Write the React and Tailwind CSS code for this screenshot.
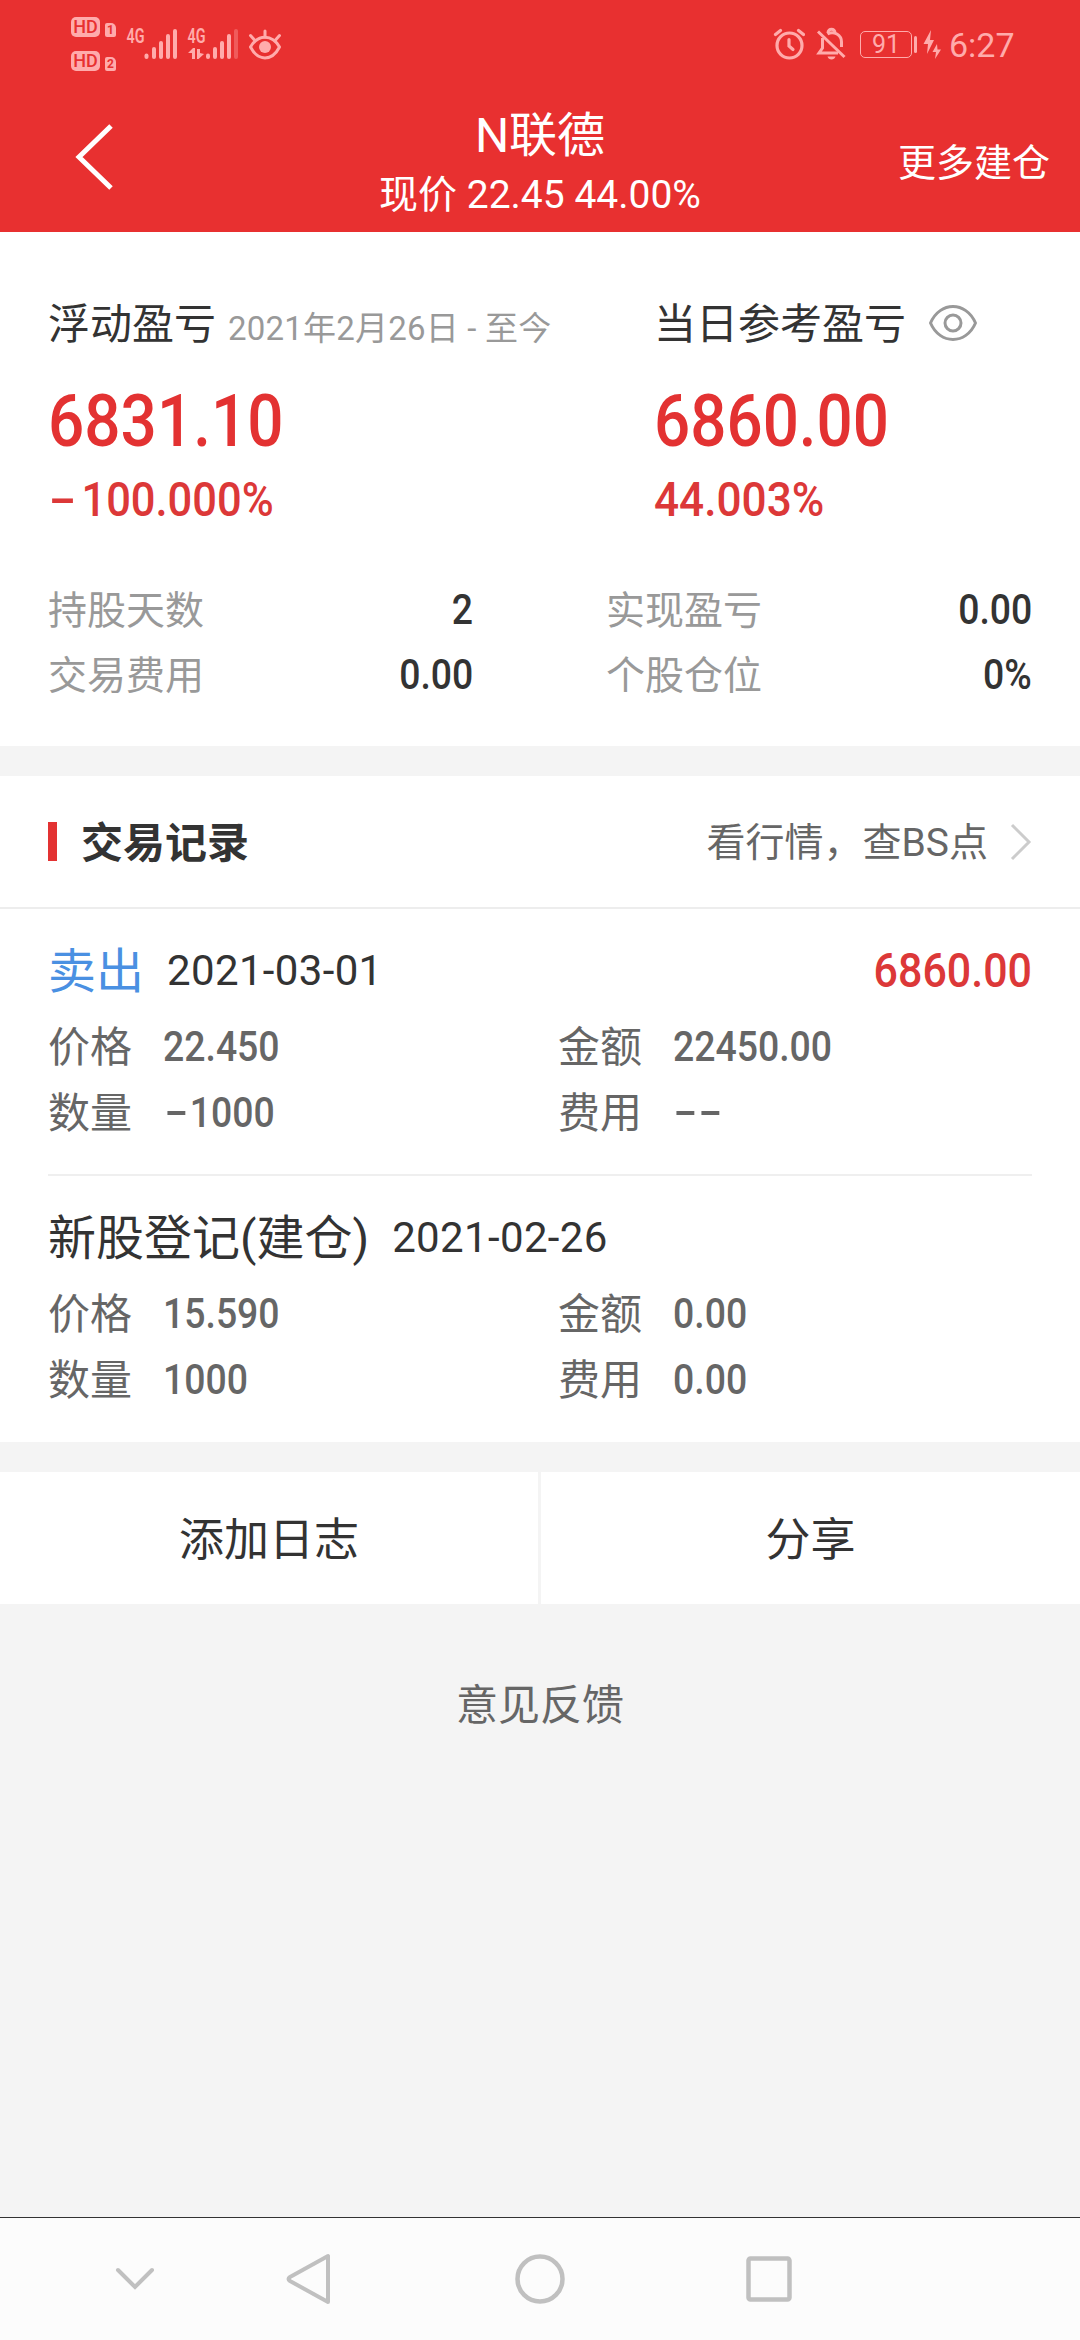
import React from "react";

const PINK = "#ffabab";
const NUM = "font-medium whitespace-nowrap";

/* Minus sign drawn wider than the font's own hyphen */
function Minus({ className = "" }) {
  return (
    <span className={"inline-block text-center " + className}>
      <span className="inline-block -translate-y-px scale-x-[1.85]">-</span>
    </span>
  );
}

function SimBadge({ n }) {
  return (
    <div className="flex h-5 items-end gap-[5px]">
      <div className="flex h-5 w-[29px] items-center justify-center rounded-[5px] bg-[#ffabab] text-[18px] leading-none font-medium text-[#e83030]">
        HD
      </div>
      <div className="flex h-[14px] w-[11px] items-center justify-center rounded-[2px] rounded-tr-[5px] bg-[#ffabab] text-[12px] leading-none font-bold text-[#e83030]">
        {n}
      </div>
    </div>
  );
}

function Signal({ weak, data }) {
  return (
    <svg width="56" height="44" viewBox="-2 -8 56 44" className="block">
      <text x="-0.5" y="16" fontSize="20" fontWeight="600" textLength="18" lengthAdjust="spacingAndGlyphs" fill={PINK}>
        4G
      </text>
      {data && (
        <g fill={PINK}>
          <path d="M0 26 L5 21 H7 V32 H4 V26 Z" />
          <path d="M9 22 H12 V26 L16 27 L10.500 32 H9 Z" />
        </g>
      )}
      <g stroke={PINK} strokeWidth="4" strokeLinecap="round">
        <path d={data ? "M20 28.500 V30" : "M19.500 28.500 V30"} />
        <path d="M27 22 V30" />
        <path d="M34 16 V30" />
        <path d="M41 9 V30" />
        <path d="M48 4 V30" opacity={weak ? 0.35 : 1} />
      </g>
    </svg>
  );
}

function StatusBar() {
  return (
    <div className="flex h-[88px] items-start">
      <div className="ml-[71px] mt-[17px] flex flex-col gap-[14px]">
        <SimBadge n="1" />
        <SimBadge n="2" />
      </div>
      <div className="ml-[9px] mt-[19px]">
        <Signal />
      </div>
      <div className="ml-[5px] mt-[19px]">
        <Signal weak data />
      </div>
      <svg width="36" height="34" viewBox="0 0 36 34" className="ml-[5px] mt-[27px] block" fill="none" stroke={PINK} strokeWidth="3" strokeLinecap="round">
        <path d="M3.500 20 C11 7 25 7 32.500 20 C25 34.500 11 34.500 3.500 20 Z" strokeLinejoin="round" />
        <circle cx="18" cy="20" r="6" fill={PINK} stroke="none" />
        <path d="M18 4 V10 M3.500 8.500 L7.500 13 M32.500 8.500 L28.500 13" />
      </svg>
      <svg width="32" height="34" viewBox="0 0 32 34" className="ml-[490px] mt-[27px] block" fill="none" stroke={PINK} strokeWidth="3.200" strokeLinecap="round">
        <circle cx="16.500" cy="18.500" r="12.500" />
        <path d="M2.500 7.500 L7.500 3.500 M30.500 7.500 L25.500 3.500" />
        <path d="M16 12.500 V19 L20 22.500" />
      </svg>
      <svg width="32" height="34" viewBox="0 0 32 34" className="ml-[11px] mt-[27px] block" fill="none" stroke={PINK} strokeWidth="3">
        <path d="M2 4.500 L28.500 30" />
        <path d="M6.500 11 V21 L3 26 H22" />
        <path d="M11.500 7 C18 3.500 25.500 8 25.500 15 V20" />
        <path d="M12 6 C12 1 19 1 19 6" />
        <path d="M11.500 29.500 H19.500 C18.500 33.500 12.500 33.500 11.500 29.500 Z" fill={PINK} stroke="none" />
      </svg>
      <div className="ml-[12px] mt-[31px] flex h-[27px] w-[52px] items-center justify-center rounded-[5px] border-[1.5px] border-[#ffabab] text-[25px] leading-none text-[#ffabab]">
        91
      </div>
      <div className="ml-[2px] mt-[36px] h-[17px] w-[3px] rounded-sm bg-[#ffabab]" />
      <svg width="20" height="32" viewBox="0 0 20 32" className="ml-[6px] mt-[29px] block" fill={PINK}>
        <path d="M8 1 L0.500 15 H5 L4 25 L11 11 H7 Z" />
        <path d="M14 15 L9.500 23 H13 L12 30 L18 20.500 H14.500 Z" />
      </svg>
      <div className="ml-[6px] mt-[25px] text-[34px] leading-[40px] text-[#ffabab]">6:27</div>
    </div>
  );
}

function Header() {
  return (
    <header className="h-[232px] bg-[#e83030] text-white">
      <StatusBar />
      <div className="flex h-[144px] items-start">
        <div className="w-[300px] pt-[35px] pl-[74px]">
          <svg width="42" height="68" viewBox="0 0 42 68" fill="none" stroke="#fff" strokeWidth="5" className="block">
            <path d="M37 3 L5 34 L37 65" />
          </svg>
        </div>
        <div className="flex-1 pt-[18px] text-center">
          <h1 className="text-[48px] leading-[60px]">N联德</h1>
          <p className="text-[39px] leading-[58px] whitespace-nowrap">现价 22.45 44.00%</p>
        </div>
        <div className="w-[300px] pt-[45px] pr-[30px] text-right text-[38px] leading-[60px]">更多建仓</div>
      </div>
    </header>
  );
}

function Stat({ label, value }) {
  return (
    <div className="flex h-[65px] items-center justify-between text-[39px] text-[#999999]">
      <span className="pt-[3px]">{label}</span>
      <span className={NUM + " origin-right scale-x-[0.89] text-[42px] text-[#333333]"}>{value}</span>
    </div>
  );
}

function Summary() {
  return (
    <section className="h-[514px] bg-white px-[48px] pt-[61px]">
      <div className="flex">
        <div className="w-[606px]">
          <div className="flex h-[60px] items-center text-[42px] text-[#333333]">
            <span className="pt-[3px]">浮动盈亏</span>
            <span className="ml-[12px] pt-[11px] text-[33px] tracking-[0.2px] text-[#999999]">2021年2月26日 - 至今</span>
          </div>
          <div className={NUM + " mt-[33px] h-[72px] origin-left scale-x-[0.887] text-[72px] leading-[72px] text-[#e33232]"}>
            6831.10
          </div>
          <div className={NUM + " mt-[12px] h-[60px] origin-left scale-x-[0.905] text-[48px] leading-[60px] text-[#dc3838]"}>
            <Minus className="w-[37px] pr-[5px]" />
            100.000%
          </div>
        </div>
        <div>
          <div className="flex h-[60px] items-center text-[42px] text-[#333333]">
            <span className="pt-[3px]">当日参考盈亏</span>
            <svg width="50" height="38" viewBox="0 0 50 38" className="ml-[22px] block" fill="none" stroke="#999" strokeWidth="3">
              <path d="M2.500 19 C12 -3 38 -3 47.500 19 C38 41 12 41 2.500 19 Z" strokeLinejoin="round" />
              <circle cx="25" cy="19" r="8" />
            </svg>
          </div>
          <div className={NUM + " mt-[33px] h-[72px] origin-left scale-x-[0.885] text-[72px] leading-[72px] text-[#e33232]"}>
            6860.00
          </div>
          <div className={NUM + " mt-[12px] h-[60px] origin-left scale-x-[0.92] text-[48px] leading-[60px] text-[#dc3838]"}>
            44.003%
          </div>
        </div>
      </div>
      <div className="mt-[47px] flex justify-between">
        <div className="w-[425px]">
          <Stat label="持股天数" value="2" />
          <Stat label="交易费用" value="0.00" />
        </div>
        <div className="w-[426px]">
          <Stat label="实现盈亏" value="0.00" />
          <Stat label="个股仓位" value="0%" />
        </div>
      </div>
    </section>
  );
}

function Field({ label, children }) {
  return (
    <div className="flex h-[66px] items-center text-[42px] text-[#666666]">
      <span className="w-[115px] pt-[2px]">{label}</span>
      <span className={NUM + " origin-left scale-x-[0.89]"}>{children}</span>
    </div>
  );
}

function Records() {
  return (
    <section className="mt-[30px] h-[666px] bg-white">
      <div className="flex h-[133px] items-center border-b-2 border-[#ededed] px-[48px]">
        <div className="h-[39px] w-[9px] bg-[#e33232]" />
        <h2 className="ml-[24px] pt-[4px] text-[42px] font-bold text-[#333333]">交易记录</h2>
        <span className="ml-auto pt-[4px] text-[39px] text-[#666666]">看行情，查BS点</span>
        <svg width="22" height="38" viewBox="0 0 22 38" className="ml-[22px] block" fill="none" stroke="#ccc" strokeWidth="3">
          <path d="M2 2 L19 19 L2 36" />
        </svg>
      </div>
      <div className="px-[48px]">
        <div className="h-[267px] border-b-2 border-[#efefef] pt-[31px]">
          <div className="flex h-[60px] items-center">
            <span className="pt-[3px] text-[48px] text-[#4a90e2]">卖出</span>
            <span className="ml-[23px] text-[42px] tracking-[0.35px] text-[#333333]">2021-03-01</span>
            <span className={NUM + " ml-auto origin-right scale-x-[0.895] pt-[2px] text-[48px] text-[#dc3838]"}>6860.00</span>
          </div>
          <div className="mt-[13px] flex">
            <div className="w-[510px]">
              <Field label="价格">22.450</Field>
              <Field label="数量">
                <Minus className="w-[30px]" />
                1000
              </Field>
            </div>
            <div>
              <Field label="金额">22450.00</Field>
              <Field label="费用">
                <Minus className="w-[28px]" />
                <Minus className="w-[28px]" />
              </Field>
            </div>
          </div>
        </div>
        <div className="pt-[31px]">
          <div className="flex h-[60px] items-center">
            <span className="pt-[3px] text-[48px] text-[#333333]">新股登记(建仓)</span>
            <span className="ml-[23px] text-[42px] tracking-[0.35px] text-[#333333]">2021-02-26</span>
          </div>
          <div className="mt-[13px] flex">
            <div className="w-[510px]">
              <Field label="价格">15.590</Field>
              <Field label="数量">1000</Field>
            </div>
            <div>
              <Field label="金额">0.00</Field>
              <Field label="费用">0.00</Field>
            </div>
          </div>
        </div>
      </div>
    </section>
  );
}

function NavBar() {
  return (
    <nav className="flex h-[123px] items-center border-t border-[#333333] bg-[#fcfcfc]">
      <svg width="42" height="26" viewBox="0 0 42 26" className="ml-[114px] block" fill="none" stroke="#c0c0c0" strokeWidth="4" strokeLinecap="round">
        <path d="M4 4 L21 21 L38 4" />
      </svg>
      <svg width="48" height="54" viewBox="0 0 48 54" className="ml-[129px] block" fill="none" stroke="#c0c0c0" strokeWidth="4" strokeLinejoin="round">
        <path d="M43 4 V50 L5 29 Q2 27 5 25 Z" />
      </svg>
      <svg width="54" height="54" viewBox="0 0 54 54" className="ml-[180px] block" fill="none" stroke="#c0c0c0" strokeWidth="4.500">
        <circle cx="27" cy="27" r="22.500" />
      </svg>
      <svg width="50" height="50" viewBox="0 0 50 50" className="ml-[177px] block" fill="none" stroke="#c0c0c0" strokeWidth="4.500">
        <rect x="4.500" y="4.500" width="41" height="41" rx="2" />
      </svg>
    </nav>
  );
}

export default function App() {
  return (
    <div className="flex h-[2340px] w-[1080px] flex-col overflow-hidden bg-[#f4f4f4] font-[Roboto,'Noto_Sans_CJK_SC',sans-serif]">
      <Header />
      <Summary />
      <Records />
      <div className="mt-[30px] flex h-[132px] gap-[3px] text-[45px] text-[#333333]">
        <button className="w-[538px] bg-white pt-[5px]">添加日志</button>
        <button className="flex-1 bg-white pt-[5px]">分享</button>
      </div>
      <div className="mt-[72px] text-center text-[42px] leading-[60px] text-[#666666]">意见反馈</div>
      <div className="flex-1" />
      <NavBar />
    </div>
  );
}
